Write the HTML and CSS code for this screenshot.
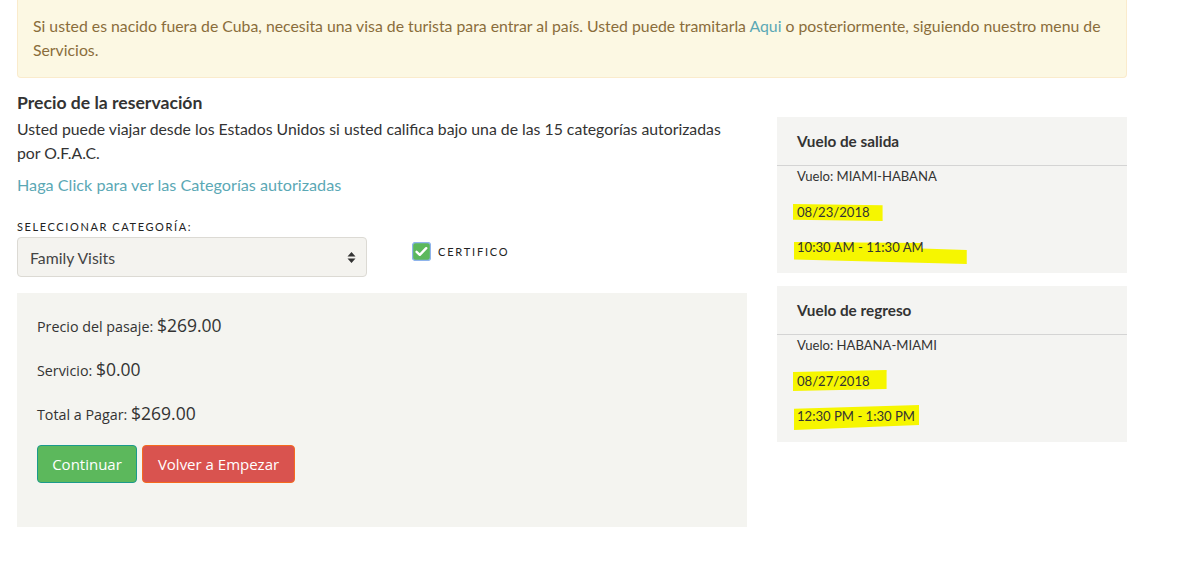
FILE: index.html
```html
<!DOCTYPE html>
<html lang="es">
<head>
<meta charset="utf-8">
<title>Precio de la reservación</title>
<link rel="stylesheet" href="styles.css">
</head>
<body>
<div class="container">
  <div class="alert">Si usted es nacido fuera de Cuba, necesita una visa de turista para entrar al país. Usted puede tramitarla <a href="#" class="link">Aqui</a> o posteriormente, siguiendo nuestro menu de Servicios.</div>

  <div class="row">
    <div class="main">
      <h3 class="title">Precio de la reservación</h3>
      <p class="intro">Usted puede viajar desde los Estados Unidos si usted califica bajo una de las 15 categorías autorizadas por O.F.A.C.</p>
      <a href="#" class="link cat-link">Haga Click para ver las Categorías autorizadas</a>

      <div class="form-row">
        <div class="form-group">
          <label class="small-label" for="cat">Seleccionar categoría:</label>
          <div class="select-wrap">
            <select id="cat" class="select"><option>Family Visits</option></select>
            <svg class="select-arrow" width="9" height="13" viewBox="0 0 9 13"><path d="M4.5 1 L8.5 5.5 H0.5 Z M4.5 12 L8.5 7.5 H0.5 Z" fill="#333"/></svg>
          </div>
        </div>
        <div class="check-group">
          <svg class="checkbox" width="19" height="19" viewBox="0 0 19 19"><rect x="0.5" y="0.5" width="18" height="18" rx="3" fill="#5cb85c" stroke="#8fb4ec" stroke-width="1.4"/><path d="M4.6 9.8 L7.8 12.8 L14.2 6.2" fill="none" stroke="#fff" stroke-width="2.4" stroke-linecap="round" stroke-linejoin="round"/></svg>
          <span class="small-label check-label">Certifico</span>
        </div>
      </div>

      <div class="price-box">
        <p class="price-line">Precio del pasaje: <span class="amount">$269.00</span></p>
        <p class="price-line">Servicio: <span class="amount">$0.00</span></p>
        <p class="price-line">Total a Pagar: <span class="amount">$269.00</span></p>
        <div class="buttons">
          <button class="btn btn-green">Continuar</button>
          <button class="btn btn-red">Volver a Empezar</button>
        </div>
      </div>
    </div>

    <div class="side">
      <div class="panel">
        <div class="panel-head">Vuelo de salida</div>
        <div class="panel-body">
          <div class="line">Vuelo: MIAMI-HABANA</div>
          <div class="line"><span class="hl hl-date1">08/23/2018</span></div>
          <div class="line"><span class="hl hl-time1">10:30 AM - 11:30 AM</span></div>
        </div>
      </div>
      <div class="panel">
        <div class="panel-head">Vuelo de regreso</div>
        <div class="panel-body">
          <div class="line">Vuelo: HABANA-MIAMI</div>
          <div class="line"><span class="hl hl-date2">08/27/2018</span></div>
          <div class="line"><span class="hl hl-time2">12:30 PM - 1:30 PM</span></div>
        </div>
      </div>
    </div>
  </div>
</div>
</body>
</html>
```

FILE: styles.css
```css
* { box-sizing: border-box; }
html, body { margin: 0; padding: 0; background: #fff; }
body {
  font-family: Lato, "Open Sans", Arial, sans-serif;
  font-size: 15.8px;
  line-height: 24px;
  color: #333;
}
.container { padding: 0 62px 0 17px; width: 1189px; }
.alert {
  background: #fcf8e3;
  border: 1px solid #faebcc;
  border-top: none;
  border-radius: 0 0 4px 4px;
  color: #8a6d3b;
  padding: 14px 15px 15px 15px;
  height: 78px;
}
.link { color: #5ba8b5; text-decoration: none; }
.row {
  display: grid;
  grid-template-columns: 730px 350px;
  column-gap: 30px;
  margin-top: 14px;
}
.title {
  margin: 0;
  font-size: 17.6px;
  line-height: 22px;
  font-weight: 700;
  color: #333;
}
.intro { margin: 3px 0 0 0; }
.cat-link { display: block; margin-top: 8px; font-size: 16.2px; }
.form-row { display: flex; align-items: flex-start; margin-top: 22px; }
.form-group { width: 350px; }
.small-label {
  display: block;
  font-size: 11px;
  line-height: 16px;
  letter-spacing: 1.6px;
  text-transform: uppercase;
  color: #222;
}
.select-wrap { position: relative; margin-top: 2px; }
.select {
  -webkit-appearance: none;
  appearance: none;
  width: 350px;
  height: 40px;
  background: #f4f3ef;
  border: 1px solid #dcdad4;
  border-radius: 4px;
  font-family: Lato, "Open Sans", Arial, sans-serif;
  font-size: 15.8px;
  color: #444;
  padding: 0 12px;
  margin: 0;
}
.select-arrow { position: absolute; right: 11px; top: 14px; }
.check-group {
  display: flex;
  align-items: center;
  margin-left: 45px;
  margin-top: 23px;
}
.checkbox { display: block; }
.check-label { margin-left: 7px; letter-spacing: 1.8px; }
.price-box {
  margin-top: 16px;
  background: #f4f4f0;
  padding: 22px 20px 44px 20px;
  font-family: "Open Sans", "Noto Sans", Arial, sans-serif;
}
.price-line {
  margin: 0 0 24px 0;
  font-size: 14.3px;
  line-height: 20px;
  height: 20px;
  color: #333;
}
.price-line:last-of-type { margin-bottom: 22px; }
.amount { font-size: 17.5px; line-height: 20px; }
.buttons { display: flex; gap: 5px; }
.btn {
  height: 38px;
  border-radius: 4px;
  color: #fff;
  font-family: "Open Sans", "Noto Sans", Arial, sans-serif;
  font-size: 15px;
  padding: 0;
  margin: 0;
  white-space: nowrap;
  text-align: center;
}
.btn-green { background: #5cb85c; border: 1px solid #1b9a8c; width: 100px; }
.btn-red { background: #d9534f; border: 1px solid #f56a1e; width: 153px; }
.side { margin-top: 25px; }
.panel { background: #f4f4f2; margin-bottom: 13px; }
.panel-head {
  height: 49px;
  padding: 12px 20px 0 20px;
  font-size: 15.3px;
  font-weight: 700;
  line-height: 24px;
  border-bottom: 1px solid #d4d4d4;
}
.panel-body { padding: 1px 20px 17px 20px; font-size: 13.1px; }
.line { line-height: 18px; margin-bottom: 18px; }
.line:last-child { margin-bottom: 0; }
.line:nth-child(3) { margin-top: -1px; }
.hl { position: relative; z-index: 0; }
.hl::before {
  content: "";
  position: absolute;
  z-index: -1;
  background: #f6f600;
}
.hl-date1::before { left: -4px; right: -13px; top: 0; bottom: -1px; clip-path: polygon(0 0, 100% 8%, 100% 100%, 0 92%); }
.hl-time1::before { left: -3px; right: -43px; top: 3px; bottom: -9px; clip-path: polygon(0 0, 74% 4%, 74% 30%, 100% 36%, 100% 100%, 0 80%); }
.hl-date2::before { left: -4px; right: -17px; top: -3px; bottom: -2px; clip-path: polygon(0 10%, 100% 0, 100% 90%, 0 100%); }
.hl-time2::before { left: -3px; right: -4px; top: -3px; bottom: -6px; clip-path: polygon(0 15%, 100% 0, 100% 80%, 0 100%); }
```
